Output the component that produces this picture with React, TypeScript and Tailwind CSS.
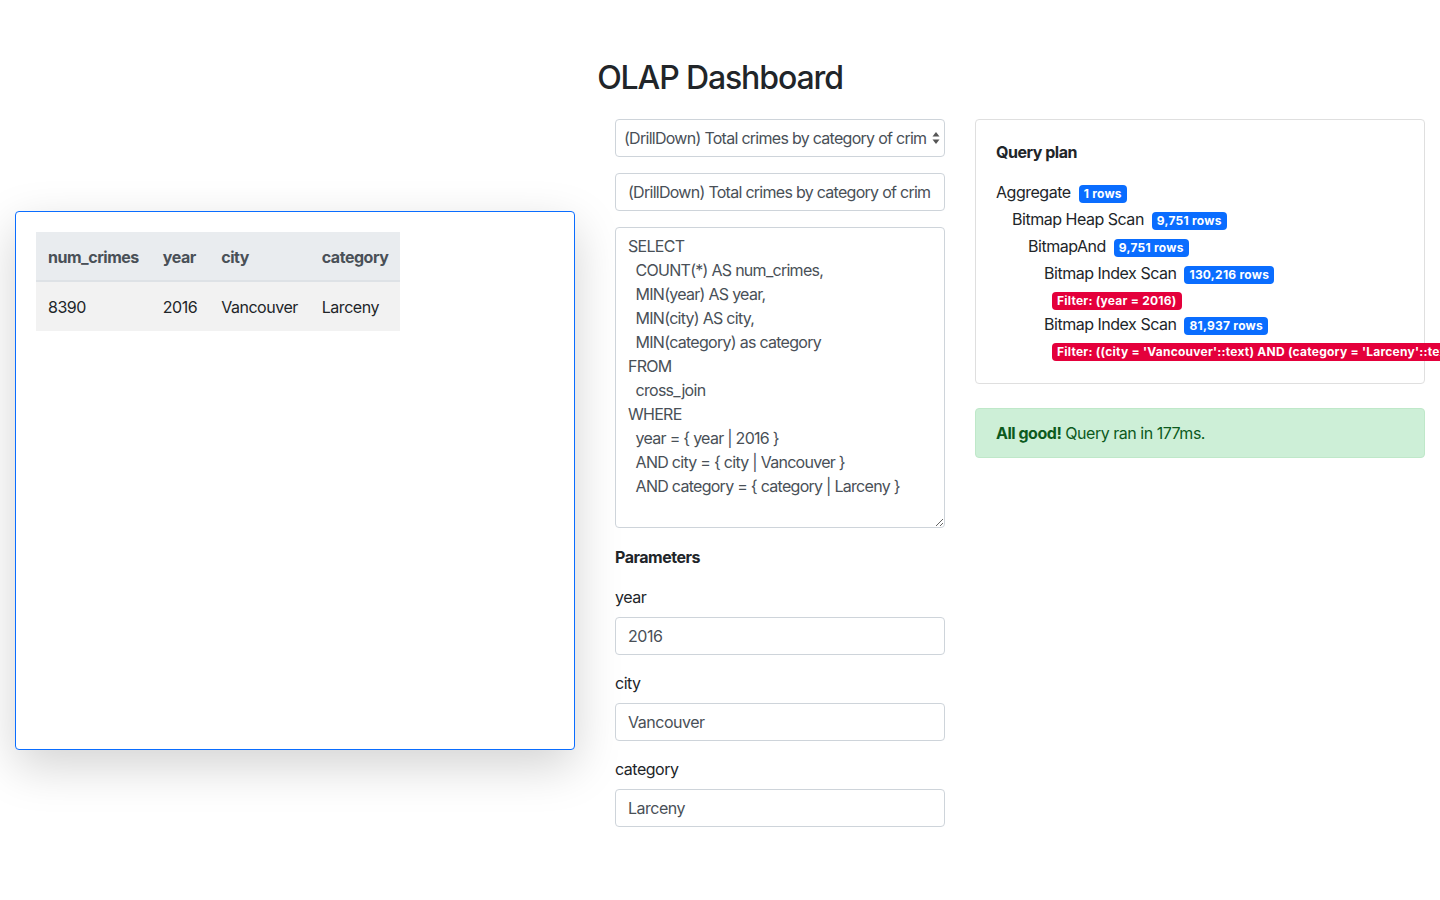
import React from "react";

const sql = `SELECT
  COUNT(*) AS num_crimes,
  MIN(year) AS year,
  MIN(city) AS city,
  MIN(category) as category
FROM
  cross_join
WHERE
  year = { year | 2016 }
  AND city = { city | Vancouver }
  AND category = { category | Larceny }`;

function Badge({ children, red }: { children: React.ReactNode; red?: boolean }) {
  return (
    <span
      className={
        "inline-block whitespace-nowrap rounded-[4px] px-[5px] text-[12px] font-bold leading-[18px] tracking-[0.02em] text-white " +
        (red ? "bg-[#e4003b]" : "bg-[#0a6dff]")
      }
    >
      {children}
    </span>
  );
}

function Node({ label, rows, indent }: { label: string; rows: string; indent: number }) {
  return (
    <div className="flex h-[27px] items-center whitespace-nowrap" style={{ paddingLeft: indent * 16 }}>
      <span>{label}</span>
      <span className="ml-[8px]">
        <Badge>{rows}</Badge>
      </span>
    </div>
  );
}

function Field({ label, value }: { label: string; value: string }) {
  return (
    <div className="mb-4">
      <div className="mb-2 leading-6">{label}</div>
      <input
        defaultValue={value}
        className="block h-[38px] w-full rounded-[4px] border border-[#ced4da] bg-white px-3 text-[16px] tracking-[-0.03em] text-[#495057] outline-none"
      />
    </div>
  );
}

export default function App() {
  return (
    <div
      className="min-h-[900px] bg-white text-[16px] leading-6 tracking-[-0.03em] text-[#212529]"
      style={{ fontFamily: "Inter, 'Noto Sans', sans-serif" }}
    >
      <h1 className="pt-[58px] pb-[21px] text-center text-[32px] font-medium leading-[40px] tracking-[-0.035em]">
        OLAP Dashboard
      </h1>
      <div className="flex px-[15px]">
        <div className="w-[560px] shrink-0">
          <div className="mt-[92px] h-[539px] rounded-[4px] border border-[#0a6dff] bg-white p-5 shadow-[0_1rem_3rem_rgba(0,0,0,0.175)]">
            <table className="border-collapse">
              <thead>
                <tr className="bg-[#e9ecef] text-[#495057]">
                  <th className="border-b-2 border-[#dee2e6] px-3 pt-[13px] pb-[11px] text-left font-bold">num_crimes</th>
                  <th className="border-b-2 border-[#dee2e6] px-3 pt-[13px] pb-[11px] text-left font-bold">year</th>
                  <th className="border-b-2 border-[#dee2e6] px-3 pt-[13px] pb-[11px] text-left font-bold">city</th>
                  <th className="border-b-2 border-[#dee2e6] px-3 pt-[13px] pb-[11px] text-left font-bold">category</th>
                </tr>
              </thead>
              <tbody>
                <tr className="bg-[#f2f2f2]">
                  <td className="px-3 pt-[13px] pb-3">8390</td>
                  <td className="px-3 pt-[13px] pb-3">2016</td>
                  <td className="px-3 pt-[13px] pb-3">Vancouver</td>
                  <td className="px-3 pt-[13px] pb-3">Larceny</td>
                </tr>
              </tbody>
            </table>
          </div>
        </div>

        <div className="ml-[40px] w-[330px] shrink-0">
          <div className="mb-4 flex h-[38px] items-center overflow-hidden rounded-[4px] border border-[#ced4da] bg-white pl-[8px] pr-[4px]">
            <span className="flex-1 overflow-hidden whitespace-nowrap tracking-[-0.045em] text-[#495057]">
              (DrillDown) Total crimes by category of crim
            </span>
            <svg width="8" height="14" viewBox="0 0 8 14" className="ml-[2px] shrink-0">
              <path d="M4 1 L7.5 5.5 H0.5 Z" fill="#555" />
              <path d="M4 13 L7.5 8.5 H0.5 Z" fill="#555" />
            </svg>
          </div>
          <div className="mb-4">
            <input
              defaultValue="(DrillDown) Total crimes by category of crim"
              className="block h-[38px] w-full rounded-[4px] border border-[#ced4da] bg-white px-3 text-[16px] tracking-[-0.045em] text-[#495057] outline-none"
            />
          </div>
          <div className="mb-[17px]">
            <textarea
              defaultValue={sql}
              className="block h-[301px] w-full rounded-[4px] border border-[#ced4da] bg-white px-3 py-[6px] text-[16px] leading-6 tracking-[-0.045em] text-[#495057] outline-none"
            />
          </div>
          <div className="mb-4 font-bold leading-6">Parameters</div>
          <Field label="year" value="2016" />
          <Field label="city" value="Vancouver" />
          <Field label="category" value="Larceny" />
        </div>

        <div className="ml-[30px] w-[450px] shrink-0">
          <div className="rounded-[4px] border border-[#dfdfdf] bg-white px-5 pt-5 pb-[22px]">
            <div className="mb-[14px] font-bold leading-6">Query plan</div>
            <Node label="Aggregate" rows="1 rows" indent={0} />
            <Node label="Bitmap Heap Scan" rows="9,751 rows" indent={1} />
            <Node label="BitmapAnd" rows="9,751 rows" indent={2} />
            <Node label="Bitmap Index Scan" rows="130,216 rows" indent={3} />
            <div className="flex h-[24px] items-start whitespace-nowrap pt-[6px] pl-[56px]">
              <Badge red>Filter: (year = 2016)</Badge>
            </div>
            <Node label="Bitmap Index Scan" rows="81,937 rows" indent={3} />
            <div className="flex h-[24px] items-start whitespace-nowrap pt-[6px] pl-[56px]">
              <Badge red>Filter: ((city = 'Vancouver'::text) AND (category = 'Larceny'::text))</Badge>
            </div>
          </div>
          <div className="mt-[24px] rounded-[4px] border border-[#bfe8c9] bg-[#cdefd7] px-5 py-3 text-[#0c5a1d]">
            <b>All good!</b> Query ran in 177ms.
          </div>
        </div>
      </div>
    </div>
  );
}
